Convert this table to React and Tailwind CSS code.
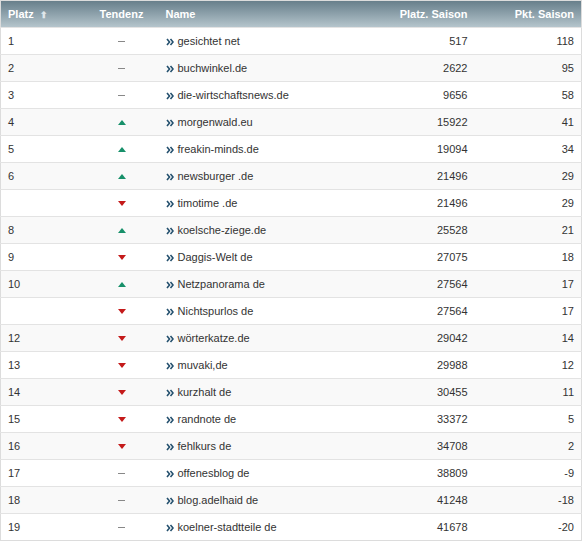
import React from 'react';

const rows = [
  ['1', 'same', 'gesichtet net', 517, 118],
  ['2', 'same', 'buchwinkel.de', 2622, 95],
  ['3', 'same', 'die-wirtschaftsnews.de', 9656, 58],
  ['4', 'up', 'morgenwald.eu', 15922, 41],
  ['5', 'up', 'freakin-minds.de', 19094, 34],
  ['6', 'up', 'newsburger .de', 21496, 29],
  ['', 'down', 'timotime .de', 21496, 29],
  ['8', 'up', 'koelsche-ziege.de', 25528, 21],
  ['9', 'down', 'Daggis-Welt de', 27075, 18],
  ['10', 'up', 'Netzpanorama de', 27564, 17],
  ['', 'down', 'Nichtspurlos de', 27564, 17],
  ['12', 'down', 'wörterkatze.de', 29042, 14],
  ['13', 'down', 'muvaki,de', 29988, 12],
  ['14', 'down', 'kurzhalt de', 30455, 11],
  ['15', 'down', 'randnote de', 33372, 5],
  ['16', 'down', 'fehlkurs de', 34708, 2],
  ['17', 'same', 'offenesblog de', 38809, -9],
  ['18', 'same', 'blog.adelhaid de', 41248, -18],
  ['19', 'same', 'koelner-stadtteile de', 41678, -20],
];

// Tendenz-Symbol
const Trend = ({ dir }) => {
  if (dir === 'up') {
    return (
      <svg width="8" height="5" viewBox="0 0 8 5" className="inline-block">
        <polygon points="4,0 8,5 0,5" fill="#17906a" />
      </svg>
    );
  }
  if (dir === 'down') {
    return (
      <svg width="8" height="5" viewBox="0 0 8 5" className="inline-block">
        <polygon points="0,0 8,0 4,5" fill="#c41a1a" />
      </svg>
    );
  }
  return <span className="inline-block w-[7px] h-px bg-[#888] align-middle" />;
};

const Chevrons = () => (
  <svg width="8" height="8" viewBox="0 0 8 8" className="inline-block mr-[4px] align-[-1px]">
    <path d="M1 1 L3.5 4 L1 7 M4.5 1 L7 4 L4.5 7" stroke="#24506e" strokeWidth="1.6" fill="none" />
  </svg>
);

export default function App() {
  return (
    <div className="w-[583px] h-[543px] bg-white font-['Liberation_Sans',Arial,sans-serif] text-[11px] text-[#333]">
      <table className="w-[582px] border-collapse border border-[#dcdcdc]">
        <thead>
          <tr className="h-[27px] bg-gradient-to-b from-[#687f8b] to-[#b8c8cf] text-white font-bold">
            <th className="w-[80px] pl-[7px] text-left">
              Platz
              <span className="ml-[6px] text-[#dfe6ea] text-[9px]">⬆</span>
            </th>
            <th className="w-[78px] text-center pl-[4px]">Tendenz</th>
            <th className="text-left pl-[7px]">Name</th>
            <th className="w-[110px] text-right pr-[10px]">Platz. Saison</th>
            <th className="w-[104px] text-right pr-[7px]">Pkt. Saison</th>
          </tr>
        </thead>
        <tbody>
          {rows.map((r, i) => (
            <tr key={i} className={`h-[27px] border-t border-[#e3e3e3] ${i % 2 ? 'bg-[#f9f9f9]' : 'bg-white'}`}>
              <td className="pl-[7px]">{r[0]}</td>
              <td className="text-center pl-[4px]"><Trend dir={r[1]} /></td>
              <td className="pl-[7px]"><Chevrons />{r[2]}</td>
              <td className="text-right pr-[10px]">{r[3]}</td>
              <td className="text-right pr-[7px]">{r[4]}</td>
            </tr>
          ))}
        </tbody>
      </table>
    </div>
  );
}
